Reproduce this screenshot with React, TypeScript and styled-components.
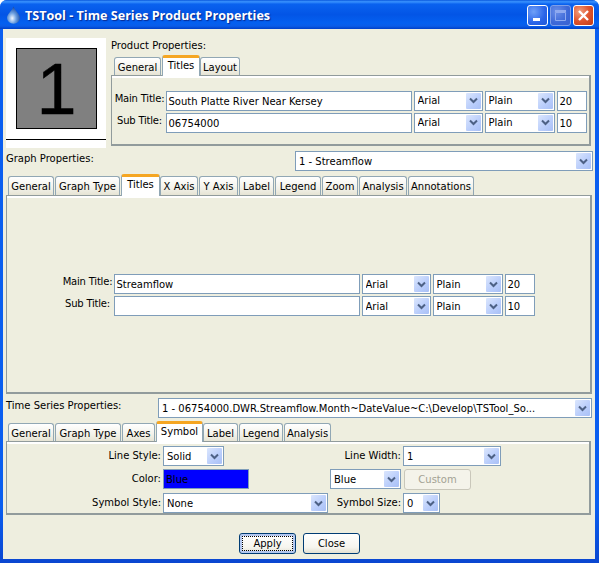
import React from 'react'
import styled, { createGlobalStyle } from 'styled-components'

const GlobalStyle = createGlobalStyle`
  html, body { margin: 0; padding: 0; background: #fff; }
  body { font-family: "DejaVu Sans", sans-serif; font-size: 10px; color: #000; }
`

const Window = styled.div`
  width: 599px;
  height: 563px;
  display: flex;
  flex-direction: column;
  background: linear-gradient(180deg, #0a5ef0 0%, #0a5ef0 90%, #0a46d0 100%);
  border-radius: 7px 7px 0 0;
  overflow: hidden;
`

const TitleBar = styled.div`
  height: 29px;
  flex: none;
  display: flex;
  align-items: center;
  padding: 1px 5px 0 6px;
  box-sizing: border-box;
  background: linear-gradient(180deg, #0a58dc 0%, #3a93ff 6%, #0a62ef 14%, #0355e6 50%, #0460f0 80%, #0a5ce8 90%, #0040c8 100%);
`

const TitleText = styled.span`
  margin-left: 4px;
  flex: 1;
  font-family: "Open Sans", sans-serif;
  font-weight: 700;
  font-size: 12.6px;
  color: #fff;
  text-shadow: 1px 1px 1px #0a2a90;
  white-space: nowrap;
`

const WinButton = styled.div<{ $kind: 'min' | 'max' | 'close' }>`
  width: 21px;
  height: 21px;
  margin-left: 2px;
  box-sizing: border-box;
  border: 1px solid ${(p) => (p.$kind === 'max' ? '#7f9fe8' : '#fff')};
  border-radius: 3px;
  display: flex;
  align-items: center;
  justify-content: center;
  background: ${(p) =>
    p.$kind === 'close'
      ? 'radial-gradient(circle at 30% 30%, #f0a080 0%, #e0552f 50%, #c23a14 100%)'
      : p.$kind === 'max'
        ? 'radial-gradient(circle at 30% 30%, #6b8fe8 0%, #3c68d8 60%, #3a62d0 100%)'
        : 'radial-gradient(circle at 30% 30%, #6fa0f8 0%, #2a64e8 60%, #2058d8 100%)'};
`

const Body = styled.div`
  flex: 1;
  margin: 0 4px 4px 3px;
  background: #eeeedf;
  padding: 9px 0 0 3px;
  display: flex;
  flex-direction: column;
  min-height: 0;
`

const TopRow = styled.div`
  display: flex;
  align-items: flex-start;
`

const Preview = styled.div`
  width: 100px;
  height: 110px;
  flex: none;
  background: #fff;
  padding-top: 10px;
  box-sizing: border-box;
  display: flex;
  flex-direction: column;
  align-items: center;
`

const PreviewSquare = styled.div`
  width: 81px;
  height: 81px;
  box-sizing: border-box;
  margin-left: 1px;
  border: 1px solid #000;
  background: #808080;
  display: flex;
  align-items: center;
  justify-content: center;
  font-family: "Liberation Sans", sans-serif;
  font-size: 72px;
  line-height: 1;
  -webkit-text-stroke: 0.5px #000;
`

const PreviewRule = styled.div`
  width: 100%;
  height: 1px;
  margin-top: 10px;
  background: #000;
`

const ProductColumn = styled.div`
  margin-left: 5px;
  width: 481px;
`

const SectionLabel = styled.div`
  height: 16px;
  line-height: 15px;
  white-space: nowrap;
`

const SectionRow = styled.div<{ $top: number; $right: number }>`
  display: flex;
  justify-content: space-between;
  align-items: flex-start;
  margin-top: ${(p) => p.$top}px;
  padding-right: ${(p) => p.$right}px;
`

const TabStrip = styled.div<{ $top: number; $indent: number; $h: number }>`
  display: flex;
  align-items: flex-end;
  height: ${(p) => p.$h}px;
  margin-top: ${(p) => p.$top}px;
  padding-left: ${(p) => p.$indent}px;
  position: relative;
  z-index: 1;
`

const Tab = styled.div<{ $active?: boolean; $w: number; $h: number }>`
  width: ${(p) => p.$w}px;
  height: ${(p) => (p.$active ? p.$h + 1 : p.$h - 2)}px;
  margin-right: ${(p) => (p.$active ? 0 : 1)}px;
  margin-bottom: ${(p) => (p.$active ? -1 : 0)}px;
  box-sizing: border-box;
  text-align: center;
  line-height: ${(p) => (p.$active ? 16 : 19)}px;
  white-space: nowrap;
  border: 1px solid #91a7b4;
  border-bottom: none;
  border-top: ${(p) => (p.$active ? '3px solid #f5a623' : '1px solid #91a7b4')};
  border-radius: 3px 3px 0 0;
  background: ${(p) => (p.$active ? '#fff' : 'linear-gradient(180deg, #fff 0%, #f3f2ea 60%, #e6e4d4 100%)')};
`

const Panel = styled.div<{ $w: number; $h: number }>`
  width: ${(p) => p.$w}px;
  height: ${(p) => p.$h}px;
  box-sizing: border-box;
  border: 1px solid #919b9c;
  border-right-width: 2px;
  border-bottom-width: 2px;
  box-shadow: inset 0 2px 0 #fff;
  display: flex;
  flex-direction: column;
  justify-content: center;
  align-items: center;
`

const TitleRows = styled.div<{ $shift?: number }>`
  display: grid;
  grid-template-columns: 50px max-content;
  column-gap: 1px;
  row-gap: 2px;
  margin-top: ${(p) => p.$shift ?? 0}px;
`

const TitleLabel = styled.div`
  text-align: center;
  line-height: 15px;
  letter-spacing: -0.2px;
  white-space: nowrap;
`

const FieldRow = styled.div`
  display: flex;
  gap: 2px;
`

const Field = styled.div<{ $w: number; $fill?: string }>`
  width: ${(p) => p.$w}px;
  height: 20px;
  box-sizing: border-box;
  border: 1px solid #7f9db9;
  background: ${(p) => p.$fill ?? '#fff'};
  padding: 1px 2px 0;
  line-height: 17px;
  white-space: nowrap;
  overflow: hidden;
`

const ComboBox = styled.div<{ $w: number }>`
  width: ${(p) => p.$w}px;
  height: 20px;
  box-sizing: border-box;
  border: 1px solid #7f9db9;
  background: #fff;
  display: flex;
  align-items: center;
  padding: 0 1px 0 3px;
`

const ComboText = styled.span`
  flex: 1;
  line-height: 18px;
  padding-top: 1px;
  white-space: nowrap;
  overflow: hidden;
`

const ComboArrow = styled.span`
  width: 15px;
  height: 16px;
  flex: none;
  border-radius: 1px;
  background: linear-gradient(135deg, #dbe6fd 0%, #b9cdfb 60%, #a9c0f6 100%);
  display: flex;
  align-items: center;
  justify-content: center;
`

const SeriesGrid = styled.div`
  display: grid;
  grid-template-columns: 153px 165px 71px 98px;
  grid-template-rows: 20px 21px 20px;
  column-gap: 2px;
  row-gap: 3px;
  align-items: start;
  width: 100%;
  box-sizing: border-box;
  padding: 4px 0 0 1px;
`

const GridLabel = styled.div`
  text-align: right;
  line-height: 19px;
  white-space: nowrap;
`

const DisabledButton = styled.div`
  width: 67px;
  height: 21px;
  margin-left: 1px;
  box-sizing: border-box;
  border: 1px solid #c9c7ba;
  border-radius: 3px;
  background: #f4f3ea;
  color: #a3a294;
  text-align: center;
  line-height: 19px;
`

const ButtonBar = styled.div`
  display: flex;
  justify-content: center;
  gap: 7px;
  margin-top: 18px;
  padding-right: 2px;
`

const PushButton = styled.div<{ $focused?: boolean }>`
  width: 57px;
  height: 21px;
  box-sizing: border-box;
  border: 1px solid #003c74;
  border-radius: 3px;
  background: linear-gradient(180deg, #fff 0%, #f6f5ee 70%, #e3e0d2 100%);
  text-align: center;
  line-height: 19px;
  box-shadow: ${(p) => (p.$focused ? 'inset 0 0 0 2px #b4c8f0' : 'none')};
  outline: ${(p) => (p.$focused ? '1px dotted #000' : 'none')};
  outline-offset: ${(p) => (p.$focused ? '-4px' : '0')};
`

const Combo = ({ w, text }: { w: number; text: string }) => (
  <ComboBox $w={w}>
    <ComboText>{text}</ComboText>
    <ComboArrow>
      <svg width="9" height="7" viewBox="0 0 9 7">
        <path d="M1 1.5 L4.5 5 L8 1.5" fill="none" stroke="#4d6185" strokeWidth="2" />
      </svg>
    </ComboArrow>
  </ComboBox>
)

const Tabs = ({ top, indent, h, items, active }: { top: number; indent: number; h: number; items: [string, number][]; active: string }) => (
  <TabStrip $top={top} $indent={indent} $h={h}>
    {items.map(([name, w]) => (
      <Tab key={name} $w={w} $h={h} $active={name === active}>
        {name}
      </Tab>
    ))}
  </TabStrip>
)

const TitleFields = ({ main, sub, shift }: { main: string; sub: string; shift?: number }) => (
  <TitleRows $shift={shift}>
    <TitleLabel>Main Title:</TitleLabel>
    <FieldRow>
      <Field $w={246}>{main}</Field>
      <Combo w={69} text="Arial" />
      <Combo w={70} text="Plain" />
      <Field $w={30}>20</Field>
    </FieldRow>
    <TitleLabel>Sub Title:</TitleLabel>
    <FieldRow>
      <Field $w={246}>{sub}</Field>
      <Combo w={69} text="Arial" />
      <Combo w={70} text="Plain" />
      <Field $w={30}>10</Field>
    </FieldRow>
  </TitleRows>
)

const productTabs: [string, number][] = [
  ['General', 47],
  ['Titles', 38],
  ['Layout', 40]
]

const graphTabs: [string, number][] = [
  ['General', 46],
  ['Graph Type', 65],
  ['Titles', 39],
  ['X Axis', 38],
  ['Y Axis', 39],
  ['Label', 35],
  ['Legend', 46],
  ['Zoom', 36],
  ['Analysis', 48],
  ['Annotations', 66]
]

const seriesTabs: [string, number][] = [
  ['General', 46],
  ['Graph Type', 66],
  ['Axes', 33],
  ['Symbol', 47],
  ['Label', 35],
  ['Legend', 44],
  ['Analysis', 47]
]

export default function App() {
  return (
    <>
      <GlobalStyle />
      <Window>
        <TitleBar>
          <svg width="15" height="18" viewBox="0 0 15 18">
            <defs>
              <radialGradient id="drop" cx="0.4" cy="0.68" r="0.7">
                <stop offset="0" stopColor="#f2f8ff" />
                <stop offset="0.45" stopColor="#6a9ee0" />
                <stop offset="1" stopColor="#123f96" />
              </radialGradient>
            </defs>
            <path d="M7.5 0.5 C9 5 14 8 14 12 A6.5 5.8 0 0 1 1 12 C1 8 6 5 7.5 0.5 Z" fill="url(#drop)" />
          </svg>
          <TitleText>TSTool - Time Series Product Properties</TitleText>
          <WinButton $kind="min">
            <svg width="13" height="13" viewBox="0 0 13 13">
              <rect x="2" y="9" width="7" height="3" fill="#fff" />
            </svg>
          </WinButton>
          <WinButton $kind="max">
            <svg width="13" height="13" viewBox="0 0 13 13">
              <path d="M1.5 3.5 H11.5 V11.5 H1.5 Z" fill="none" stroke="#8faaf0" />
              <rect x="1" y="1" width="11" height="2" fill="#8faaf0" />
            </svg>
          </WinButton>
          <WinButton $kind="close">
            <svg width="13" height="13" viewBox="0 0 13 13">
              <path d="M2 2 L11 11 M11 2 L2 11" stroke="#fff" strokeWidth="2.4" />
            </svg>
          </WinButton>
        </TitleBar>
        <Body>
          <TopRow>
            <Preview>
              <PreviewSquare>1</PreviewSquare>
              <PreviewRule />
            </Preview>
            <ProductColumn>
              <SectionLabel>Product Properties:</SectionLabel>
              <Tabs top={1} indent={3} h={20} items={productTabs} active="Titles" />
              <Panel $w={480} $h={71}>
                <TitleFields main="South Platte River Near Kersey" sub="06754000" shift={3} />
              </Panel>
            </ProductColumn>
          </TopRow>
          <SectionRow $top={3} $right={2}>
            <SectionLabel>Graph Properties:</SectionLabel>
            <Combo w={298} text="1 - Streamflow" />
          </SectionRow>
          <Tabs top={3} indent={2} h={21} items={graphTabs} active="Titles" />
          <Panel $w={586} $h={199}>
            <TitleFields main="Streamflow" sub="" shift={2} />
          </Panel>
          <SectionRow $top={4} $right={3}>
            <SectionLabel>Time Series Properties:</SectionLabel>
            <Combo w={434} text="1 - 06754000.DWR.Streamflow.Month~DateValue~C:\Develop\TSTool_So..." />
          </SectionRow>
          <Tabs top={3} indent={2} h={20} items={seriesTabs} active="Symbol" />
          <Panel $w={585} $h={74}>
            <SeriesGrid>
              <GridLabel>Line Style:</GridLabel>
              <Combo w={61} text="Solid" />
              <GridLabel>Line Width:</GridLabel>
              <Combo w={98} text="1" />
              <GridLabel>Color:</GridLabel>
              <Field $w={86} $fill="#0000ff">Blue</Field>
              <Combo w={71} text="Blue" />
              <DisabledButton>Custom</DisabledButton>
              <GridLabel>Symbol Style:</GridLabel>
              <Combo w={165} text="None" />
              <GridLabel>Symbol Size:</GridLabel>
              <Combo w={37} text="0" />
            </SeriesGrid>
          </Panel>
          <ButtonBar>
            <PushButton $focused>Apply</PushButton>
            <PushButton>Close</PushButton>
          </ButtonBar>
        </Body>
      </Window>
    </>
  )
}
